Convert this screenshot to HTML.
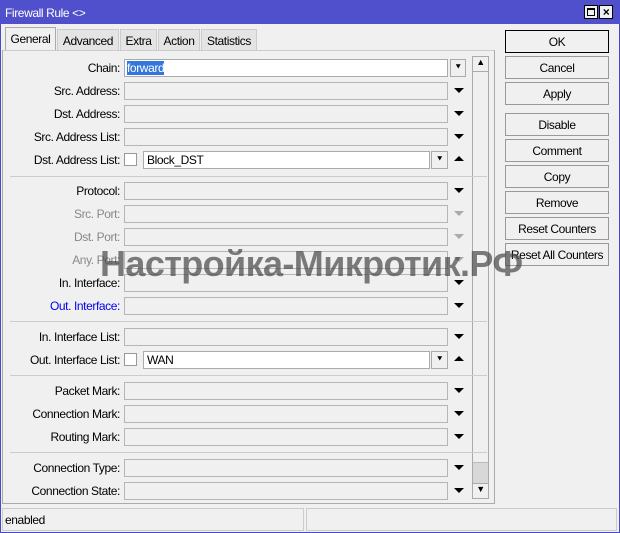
<!DOCTYPE html>
<html><head><style>
*{box-sizing:border-box;margin:0;padding:0}
body{width:620px;height:533px;background:#f0f0f0;font-family:"Liberation Sans",sans-serif;font-size:12px;color:#000;position:relative;overflow:hidden;letter-spacing:-0.4px}
.win{position:absolute;left:0;top:0;width:620px;height:533px;border:1px solid #4a4ac8;border-top:none}
.title{position:absolute;left:0;top:0;width:620px;height:24px;background:#5050cc;color:#fff;padding:6px 0 0 5px;font-size:12px}
.tb{position:absolute;top:5px;width:14px;height:14px;background:#f0f0f0;border:1px solid #000}
.tab{position:absolute;top:29px;height:22px;border:1px solid #ccc;border-bottom:none;background:#e4e4e4;padding:4px 0 0 0;text-align:center}
.tab.act{background:#f0f0f0;top:27px;height:24px;border-color:#aaa}
.panel{position:absolute;left:2px;top:50px;width:493px;height:454px;border:1px solid #aaa;border-top:1px solid #ccc}
.lbl{position:absolute;right:500px;text-align:right;white-space:nowrap}
.g{color:#888}.b{color:#0000ee}
.inp{position:absolute;left:124px;width:324px;height:18px;border:1px solid #b5b5b5;background:#f0f0f0}
.w{background:#fff;border-color:#aaa}
.arr{position:absolute;left:454px;width:0;height:0;border-left:5px solid transparent;border-right:5px solid transparent;border-top:5px solid #000}
.arr.gr{border-top-color:#aaa}
.up{position:absolute;left:454px;border-left:5px solid transparent;border-right:5px solid transparent;border-bottom:5px solid #000}
.sep{position:absolute;left:10px;width:477px;height:1px;background:#ccc}
.dd{position:absolute;left:431px;width:17px;height:18px;border:1px solid #aaa;background:#f0f0f0;text-align:center;font-size:9px;line-height:15px}
.cb{position:absolute;left:124px;width:13px;height:13px;border:1px solid #999;background:#fff}
.btn{position:absolute;left:505px;width:104px;height:23px;border:1px solid #999;text-align:center;padding-top:4px;background:#f0f0f0}
.sb{position:absolute;left:472px;top:56px;width:17px;height:443px;border:1px solid #aaa;background:#f0f0f0}
.wm{position:absolute;left:100px;top:243px;font-size:36px;font-weight:bold;color:rgba(70,70,70,0.7);letter-spacing:-0.6px;white-space:nowrap;font-family:"Liberation Sans",sans-serif}
</style></head><body>
<div class="win"></div>
<div class="title">Firewall Rule &lt;&gt;</div>
<div class="tb" style="left:584px"><div style="position:absolute;left:2px;top:2px;width:8px;height:8px;border:1px solid #000;border-top-width:2px"></div></div>
<div class="tb" style="left:599px;font-size:12px;font-weight:bold;line-height:12px;text-align:center">×</div>

<div class="tab act" style="left:5px;width:51px">General</div>
<div class="tab" style="left:57px;width:62px">Advanced</div>
<div class="tab" style="left:120px;width:37px">Extra</div>
<div class="tab" style="left:158px;width:42px">Action</div>
<div class="tab" style="left:201px;width:56px">Statistics</div>

<div class="panel"></div>
<div class="sb"><div style="height:15px;border-bottom:1px solid #aaa;text-align:center;font-size:9px">▲</div><div style="position:absolute;top:405px;left:0;width:15px;height:22px;background:#d8d8d8;border-top:1px solid #bbb"></div><div style="position:absolute;bottom:0;width:15px;height:15px;border-top:1px solid #aaa;text-align:center;font-size:9px">▼</div></div>

<div class="lbl" style="top:61px">Chain:</div><div class="inp w" style="top:59px;width:324px;padding:1px 2px"><span style="background:#3377dd;color:#fff">forward</span></div><div class="dd" style="top:59px;left:450px;width:16px">⯆</div>
<div class="lbl" style="top:84px">Src. Address:</div><div class="inp" style="top:82px"></div><div class="arr" style="top:88px"></div>
<div class="lbl" style="top:107px">Dst. Address:</div><div class="inp" style="top:105px"></div><div class="arr" style="top:111px"></div>
<div class="lbl" style="top:130px">Src. Address List:</div><div class="inp" style="top:128px"></div><div class="arr" style="top:134px"></div>
<div class="lbl" style="top:153px">Dst. Address List:</div><div class="cb" style="top:153px"></div><div class="inp w" style="left:143px;width:287px;top:151px;padding:1px 3px">Block_DST</div><div class="dd" style="top:151px">⯆</div><div class="up" style="top:156px"></div>
<div class="sep" style="top:176px"></div>
<div class="lbl" style="top:184px">Protocol:</div><div class="inp" style="top:182px"></div><div class="arr" style="top:188px"></div>
<div class="lbl g" style="top:207px">Src. Port:</div><div class="inp" style="top:205px"></div><div class="arr gr" style="top:211px"></div>
<div class="lbl g" style="top:230px">Dst. Port:</div><div class="inp" style="top:228px"></div><div class="arr gr" style="top:234px"></div>
<div class="lbl g" style="top:253px">Any. Port:</div><div class="inp" style="top:251px"></div><div class="arr gr" style="top:257px"></div>
<div class="lbl" style="top:276px">In. Interface:</div><div class="inp" style="top:274px"></div><div class="arr" style="top:280px"></div>
<div class="lbl b" style="top:299px">Out. Interface:</div><div class="inp" style="top:297px"></div><div class="arr" style="top:303px"></div>
<div class="sep" style="top:321px"></div>
<div class="lbl" style="top:330px">In. Interface List:</div><div class="inp" style="top:328px"></div><div class="arr" style="top:334px"></div>
<div class="lbl" style="top:353px">Out. Interface List:</div><div class="cb" style="top:353px"></div><div class="inp w" style="left:143px;width:287px;top:351px;padding:1px 3px">WAN</div><div class="dd" style="top:351px">⯆</div><div class="up" style="top:356px"></div>
<div class="sep" style="top:375px"></div>
<div class="lbl" style="top:384px">Packet Mark:</div><div class="inp" style="top:382px"></div><div class="arr" style="top:388px"></div>
<div class="lbl" style="top:407px">Connection Mark:</div><div class="inp" style="top:405px"></div><div class="arr" style="top:411px"></div>
<div class="lbl" style="top:430px">Routing Mark:</div><div class="inp" style="top:428px"></div><div class="arr" style="top:434px"></div>
<div class="sep" style="top:452px"></div>
<div class="lbl" style="top:461px">Connection Type:</div><div class="inp" style="top:459px"></div><div class="arr" style="top:465px"></div>
<div class="lbl" style="top:484px">Connection State:</div><div class="inp" style="top:482px"></div><div class="arr" style="top:488px"></div>

<div class="btn" style="top:30px;border:1px solid #000">OK</div>
<div class="btn" style="top:56px">Cancel</div>
<div class="btn" style="top:82px">Apply</div>
<div class="btn" style="top:113px">Disable</div>
<div class="btn" style="top:139px">Comment</div>
<div class="btn" style="top:165px">Copy</div>
<div class="btn" style="top:191px">Remove</div>
<div class="btn" style="top:217px">Reset Counters</div>
<div class="btn" style="top:243px">Reset All Counters</div>

<div style="position:absolute;left:2px;top:508px;width:302px;height:23px;border:1px solid #ccc;padding:4px 2px">enabled</div>
<div style="position:absolute;left:306px;top:508px;width:311px;height:23px;border:1px solid #ccc"></div>

<div class="wm">Настройка-Микротик.РФ</div>
</body></html>
